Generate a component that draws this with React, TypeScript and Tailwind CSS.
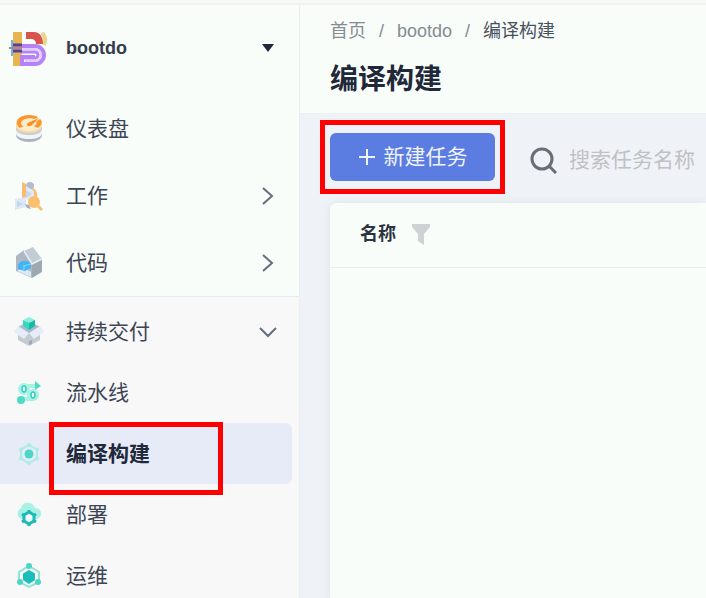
import React, { useState } from 'react';

const NAV_TEXT = 'text-[21px] leading-7 text-[#3d4555]';

const LogoIcon = () => (
  <svg width="40" height="40" viewBox="0 0 40 40" fill="none" aria-hidden="true">
    <path d="M34 5c3 3 4 7 2 12" stroke="#ecd58a" strokeWidth="4" />
    <rect x="3" y="12" width="4" height="16" fill="#6fb2ee" />
    <rect x="5" y="12" width="2" height="16" fill="#e9a0cf" />
    <rect x="5" y="4" width="9" height="34" fill="#e9b44f" />
    <path d="M18 4h8c6 0 9 5 9 12h-7c0-3-2-5-5-5h-5z" fill="#d9544f" />
    <path d="M13 18h14a9 9 0 0 1 0 18H14V29h13" stroke="#b583f7" strokeWidth="4" />
    <path d="M13 24h14a3 3 0 0 1 0 6H16" stroke="#b583f7" strokeWidth="3" />
    <path d="M13 21h14a6 6 0 0 1 0 12H17" stroke="#e0cdfb" strokeWidth="2" />
    <path d="M5 17h9M5 23h9" stroke="#59409b" strokeWidth="3" />
    <path d="M1 20h13" stroke="#a78a96" strokeWidth="2" />
  </svg>
);

const DashboardIcon = () => (
  <svg width="30" height="30" viewBox="0 0 30 30" fill="none" aria-hidden="true">
    <path d="M2 17v4c0 4 6 7 13 7s13-3 13-7v-4z" fill="#aab4c0" />
    <path d="M2 14v5c0 4 6 6 13 6s13-2 13-6v-5z" fill="#f2f4f8" />
    <path d="M2 10v5c0 4 6 6 13 6s13-2 13-6v-5z" fill="#c8ced7" />
    <path d="M2 9v3c0 4 6 7 13 7s13-3 13-7V9z" fill="#fbd9a4" />
    <ellipse cx="15" cy="9" rx="13" ry="8" fill="#fdeccc" />
    <path d="M6 14C-1 9 4 1 15 1c4 0 7 1 9 2l-3 2C13 3 7 6 7 9c0 2 1 3 3 3zM26 5c3 3 2 6-2 9l-4-2c3-2 3-3 2-4z" fill="#fb962d" />
    <path d="M25 4l-7 7c-2 2-6 1-5-1 1-2 6-3 12-6z" fill="#fb8d23" />
  </svg>
);

const WorkIcon = () => (
  <svg width="30" height="30" viewBox="0 0 30 30" fill="none" aria-hidden="true">
    <circle cx="16" cy="5" r="4" fill="#b1bdcb" />
    <path d="M18 7c4 1 6 5 5 10l-5-2z" fill="#f9bb78" />
    <path d="M8 1l4 2v17l-4-2z" fill="#f9bc72" />
    <path d="M12 5l8 5v12l-8-4z" fill="#e0e9f5" />
    <path d="M12 9l6 4-6 4z" fill="#c7d6e8" />
    <path d="M1 18l11-2v10L1 29z" fill="#dce7f7" />
    <path d="M3 20l6 3-6 3z" fill="#c5d5ea" />
    <path d="M11 23l4 1 2 4-4-1z" fill="#a5afbb" />
    <circle cx="20" cy="21" r="6" fill="#fbc06f" />
    <path d="M24 25l4 4" stroke="#fbc06f" strokeWidth="3" />
  </svg>
);

const CodeIcon = () => (
  <svg width="30" height="32" viewBox="0 0 30 32" fill="none" aria-hidden="true">
    <path d="M2 9l8-6 8 13v15L2 24z" fill="#aeb8c2" />
    <path d="M10 4l9-4 9 12-10 5z" fill="#c3ccd5" />
    <path d="M18 17l10-5v13l-10 6z" fill="#9da8b1" />
    <path d="M10 4l8 13 10-5" stroke="#e8edf2" strokeWidth="1.5" />
    <path d="M3 24l7-4 7 5v5z" fill="#dce8f5" />
    <path d="M4 19c0-3 4-6 8-5 3 0 5 2 5 4v3l-6 3-7-2z" fill="#43b5f5" />
    <path d="M9 19l8-2M10 19v4" stroke="#8bd6ff" />
  </svg>
);

const DeliveryIcon = () => (
  <svg width="30" height="30" viewBox="0 0 30 30" fill="none" aria-hidden="true">
    <path d="M4 14v9l11 6 11-6v-9z" fill="#c3cad2" />
    <path d="M4 10l11-6 11 6-11 7z" fill="#aeb9c7" />
    <path d="M4 9l11 7-5 6-10-7zM26 9l-11 7 5 6 10-7z" fill="#e6ecf8" />
    <path d="M15 24l3-1v4l-3 1z" fill="#9fa8b3" />
    <path d="M9 3l6-3 6 3-6 3z" fill="#8bf0db" />
    <path d="M9 3l6 3v7l-6-4z" fill="#37d8c1" />
    <path d="M15 6l6-3v6l-6 4z" fill="#16bba7" />
  </svg>
);

const PipelineIcon = () => (
  <svg width="26" height="26" viewBox="0 0 26 26" fill="none" aria-hidden="true">
    <path d="M7 6h13M7 19h11" stroke="#a7f1e5" strokeWidth="4" />
    <circle cx="8" cy="9" r="6" fill="#a7f1e5" />
    <circle cx="17" cy="15" r="6" fill="#a7f1e5" />
    <path d="M19 1l6 5-6 4z" fill="#4edbc8" />
    <circle cx="5" cy="20" r="4" fill="#4edbc8" />
    <ellipse cx="8" cy="9" rx="2" ry="3" fill="#effcfa" stroke="#36cdbd" strokeWidth="1.5" />
    <ellipse cx="17" cy="15" rx="2" ry="3" fill="#effcfa" stroke="#36cdbd" strokeWidth="1.5" />
  </svg>
);

const BuildIcon = () => (
  <svg width="26" height="26" viewBox="0 0 26 26" fill="none" aria-hidden="true">
    <path d="M13 4l8 4.5v9L13 22l-8-4.5v-9z" stroke="#a9eee5" strokeWidth="2" />
    <circle cx="13" cy="13" r="4.500" fill="#4bd6c9" />
    <g fill="#a9eee5">
      <circle cx="13" cy="4" r="2" />
      <circle cx="21" cy="8.500" r="2" />
      <circle cx="21" cy="17.500" r="2" />
      <circle cx="13" cy="22" r="2" />
      <circle cx="5" cy="17.500" r="2" />
      <circle cx="5" cy="8.500" r="2" />
    </g>
  </svg>
);

const DeployIcon = () => (
  <svg width="26" height="26" viewBox="0 0 26 26" fill="none" aria-hidden="true">
    <path d="M6 17a5.500 5.500 0 0 1-1-10.500C6-1 17-1 19 6c8 0 8 10 1 11z" fill="#a8f2e4" />
    <path d="M13 10l5 3v6l-5 3-5-3v-6z" stroke="#20b9b5" strokeWidth="3" fill="#effafa" />
    <path d="M13 8v3M13 21v3M6 12l3 2M20 12l-3 2M6 20l3-2M20 20l-3-2" stroke="#20b9b5" strokeWidth="3" />
  </svg>
);

const OpsIcon = () => (
  <svg width="26" height="26" viewBox="0 0 26 26" fill="none" aria-hidden="true">
    <path d="M13 3l10 6v10l-10 5-10-5V9z" stroke="#8fe3d8" strokeWidth="2" />
    <path d="M13 7l6 3.500v6.500l-6 4-6-4v-6.500z" fill="#19bdb9" />
    <circle cx="13" cy="3" r="3" fill="#4bd6c4" />
    <circle cx="4" cy="19" r="3" fill="#4bd6c4" />
    <circle cx="22" cy="19" r="3" fill="#4bd6c4" />
  </svg>
);

const Chevron = ({ open }: { open?: boolean }) => (
  <svg className="mr-5" width="22" height="22" viewBox="0 0 22 22" fill="none" stroke="#656e7b" strokeWidth="2" aria-hidden="true">
    <path d={open ? 'M3 7l8 8 8-8' : 'M6 3l9 8-9 8'} />
  </svg>
);

const mainItems = [
  { label: '仪表盘', icon: <DashboardIcon />, more: false },
  { label: '工作', icon: <WorkIcon />, more: true },
  { label: '代码', icon: <CodeIcon />, more: true },
];

const subItems = [
  { label: '流水线', icon: <PipelineIcon /> },
  { label: '编译构建', icon: <BuildIcon /> },
  { label: '部署', icon: <DeployIcon /> },
  { label: '运维', icon: <OpsIcon /> },
];

const Sidebar = () => {
  const [open, setOpen] = useState<boolean>(true);

  return (
    <aside className="flex w-[300px] shrink-0 flex-col border-r border-[#e9eef3] bg-[#f8fdf9]">
      <button className="flex h-[90px] shrink-0 items-center pb-1 text-left">
        <span className="flex w-[66px] shrink-0 items-center pl-2"><LogoIcon /></span>
        <span className="flex-1 text-[18px] leading-6 font-bold text-[#343c4c]">bootdo</span>
        <svg className="mr-[25px]" width="12" height="8" viewBox="0 0 12 8" aria-hidden="true">
          <path d="M0 0h12L6 8z" fill="#20283a" />
        </svg>
      </button>
      <nav className="flex flex-col">
        {mainItems.map((item) => (
          <a key={item.label} href="#" className="flex h-[67px] shrink-0 items-center">
            <span className="flex w-[58px] shrink-0 justify-center">{item.icon}</span>
            <span className={`flex-1 pl-2 ${NAV_TEXT}`}>{item.label}</span>
            {item.more && <Chevron />}
          </a>
        ))}
      </nav>
      <div className="flex-1 border-t border-[#e5ebef] bg-[#f8f8f9]">
        <button
          aria-expanded={open}
          onClick={() => setOpen(!open)}
          className="flex h-[65px] w-full items-center pt-1 text-left"
        >
          <span className="flex w-[58px] shrink-0 justify-center"><DeliveryIcon /></span>
          <span className={`flex-1 pl-2 ${NAV_TEXT}`}>持续交付</span>
          <Chevron open={open} />
        </button>
        {open && subItems.map((item) => {
          const active = item.label === '编译构建';
          return (
            <a
              key={item.label}
              href="#"
              className={`relative mr-[7px] flex h-[61px] items-center rounded-r-md ${active ? 'z-10 bg-[#e7ebf7]' : ''}`}
            >
              <span className="flex w-[58px] shrink-0 justify-center">{item.icon}</span>
              <span className={active ? 'pl-2 text-[21px] leading-7 font-bold text-[#20283a]' : `pl-2 ${NAV_TEXT}`}>
                {item.label}
              </span>
              {active && <span className="absolute -top-px -bottom-[11px] left-[49px] w-[174px] border-5 border-[#ff0000]" />}
            </a>
          );
        })}
      </div>
    </aside>
  );
};

const Header = () => (
  <header className="h-[109px] shrink-0 border-b border-[#e9f0f2] bg-[#f8fdf9] pt-3 pl-[30px]">
    <nav className="flex items-center gap-[13px] text-[18px] leading-7 text-[#858b93]">
      <a href="#">首页</a>
      <span>/</span>
      <a href="#">bootdo</a>
      <span>/</span>
      <span className="text-[#4a515d]">编译构建</span>
    </nav>
    <h1 className="mt-[15px] text-[28px] leading-10 font-bold text-[#20283a]">编译构建</h1>
  </header>
);

const Toolbar = () => (
  <div className="flex items-start pt-[19px] pl-[30px]">
    <div className="relative shrink-0">
      <button className="flex h-12 w-[165px] items-center justify-center gap-2 rounded-md bg-[#5b7ce0] text-[21px] text-[#f0f4ff]">
        <svg width="18" height="18" viewBox="0 0 18 18" stroke="currentColor" strokeWidth="2" aria-hidden="true">
          <path d="M9 1v16M1 9h16" />
        </svg>
        新建任务
      </button>
      <span className="pointer-events-none absolute -inset-x-[10px] -inset-y-[13px] border-5 border-[#ff0000]" />
    </div>
    <label className="ml-[35px] flex h-[54px] min-w-0 flex-1 items-center gap-3">
      <svg className="shrink-0" width="27" height="27" viewBox="0 0 27 27" fill="none" stroke="#696e76" strokeWidth="3" aria-hidden="true">
        <circle cx="12" cy="12" r="10" />
        <path d="M19 19l7 7" />
      </svg>
      <input
        type="text"
        aria-label="搜索任务名称"
        placeholder="搜索任务名称"
        className="w-full min-w-0 bg-transparent text-[21px] leading-8 outline-none placeholder:text-[#bfc1c4]"
      />
    </label>
  </div>
);

const App = () => {
  return (
    <div className="flex h-screen flex-col overflow-hidden bg-[#eff3f8] font-['Liberation_Sans','Noto_Sans_CJK_SC',sans-serif]">
      <div className="h-[5px] shrink-0 border-b-2 border-[#f0f2f0] bg-[#f6f9f6]" />
      <div className="flex min-h-0 flex-1">
        <Sidebar />
        <main className="flex min-w-0 flex-1 flex-col">
          <Header />
          <Toolbar />
          <section className="mt-4 ml-[30px] flex-1 rounded-tl-md bg-[#f8fdf9] shadow-[0_0_8px_#dde2e5]">
            <table className="w-full">
              <thead>
                <tr className="border-b border-[#e9eef0]">
                  <th className="h-[64px] pl-[30px] text-left text-[18px] text-[#2b3342]">
                    <span className="flex items-center gap-4">
                      名称
                      <svg width="18" height="21" viewBox="0 0 18 21" fill="#cfd2d4" aria-hidden="true">
                        <path d="M0 0h18v3l-6 7v11l-6-4v-7L0 3z" />
                      </svg>
                    </span>
                  </th>
                </tr>
              </thead>
            </table>
          </section>
        </main>
      </div>
    </div>
  );
};

export default App;
